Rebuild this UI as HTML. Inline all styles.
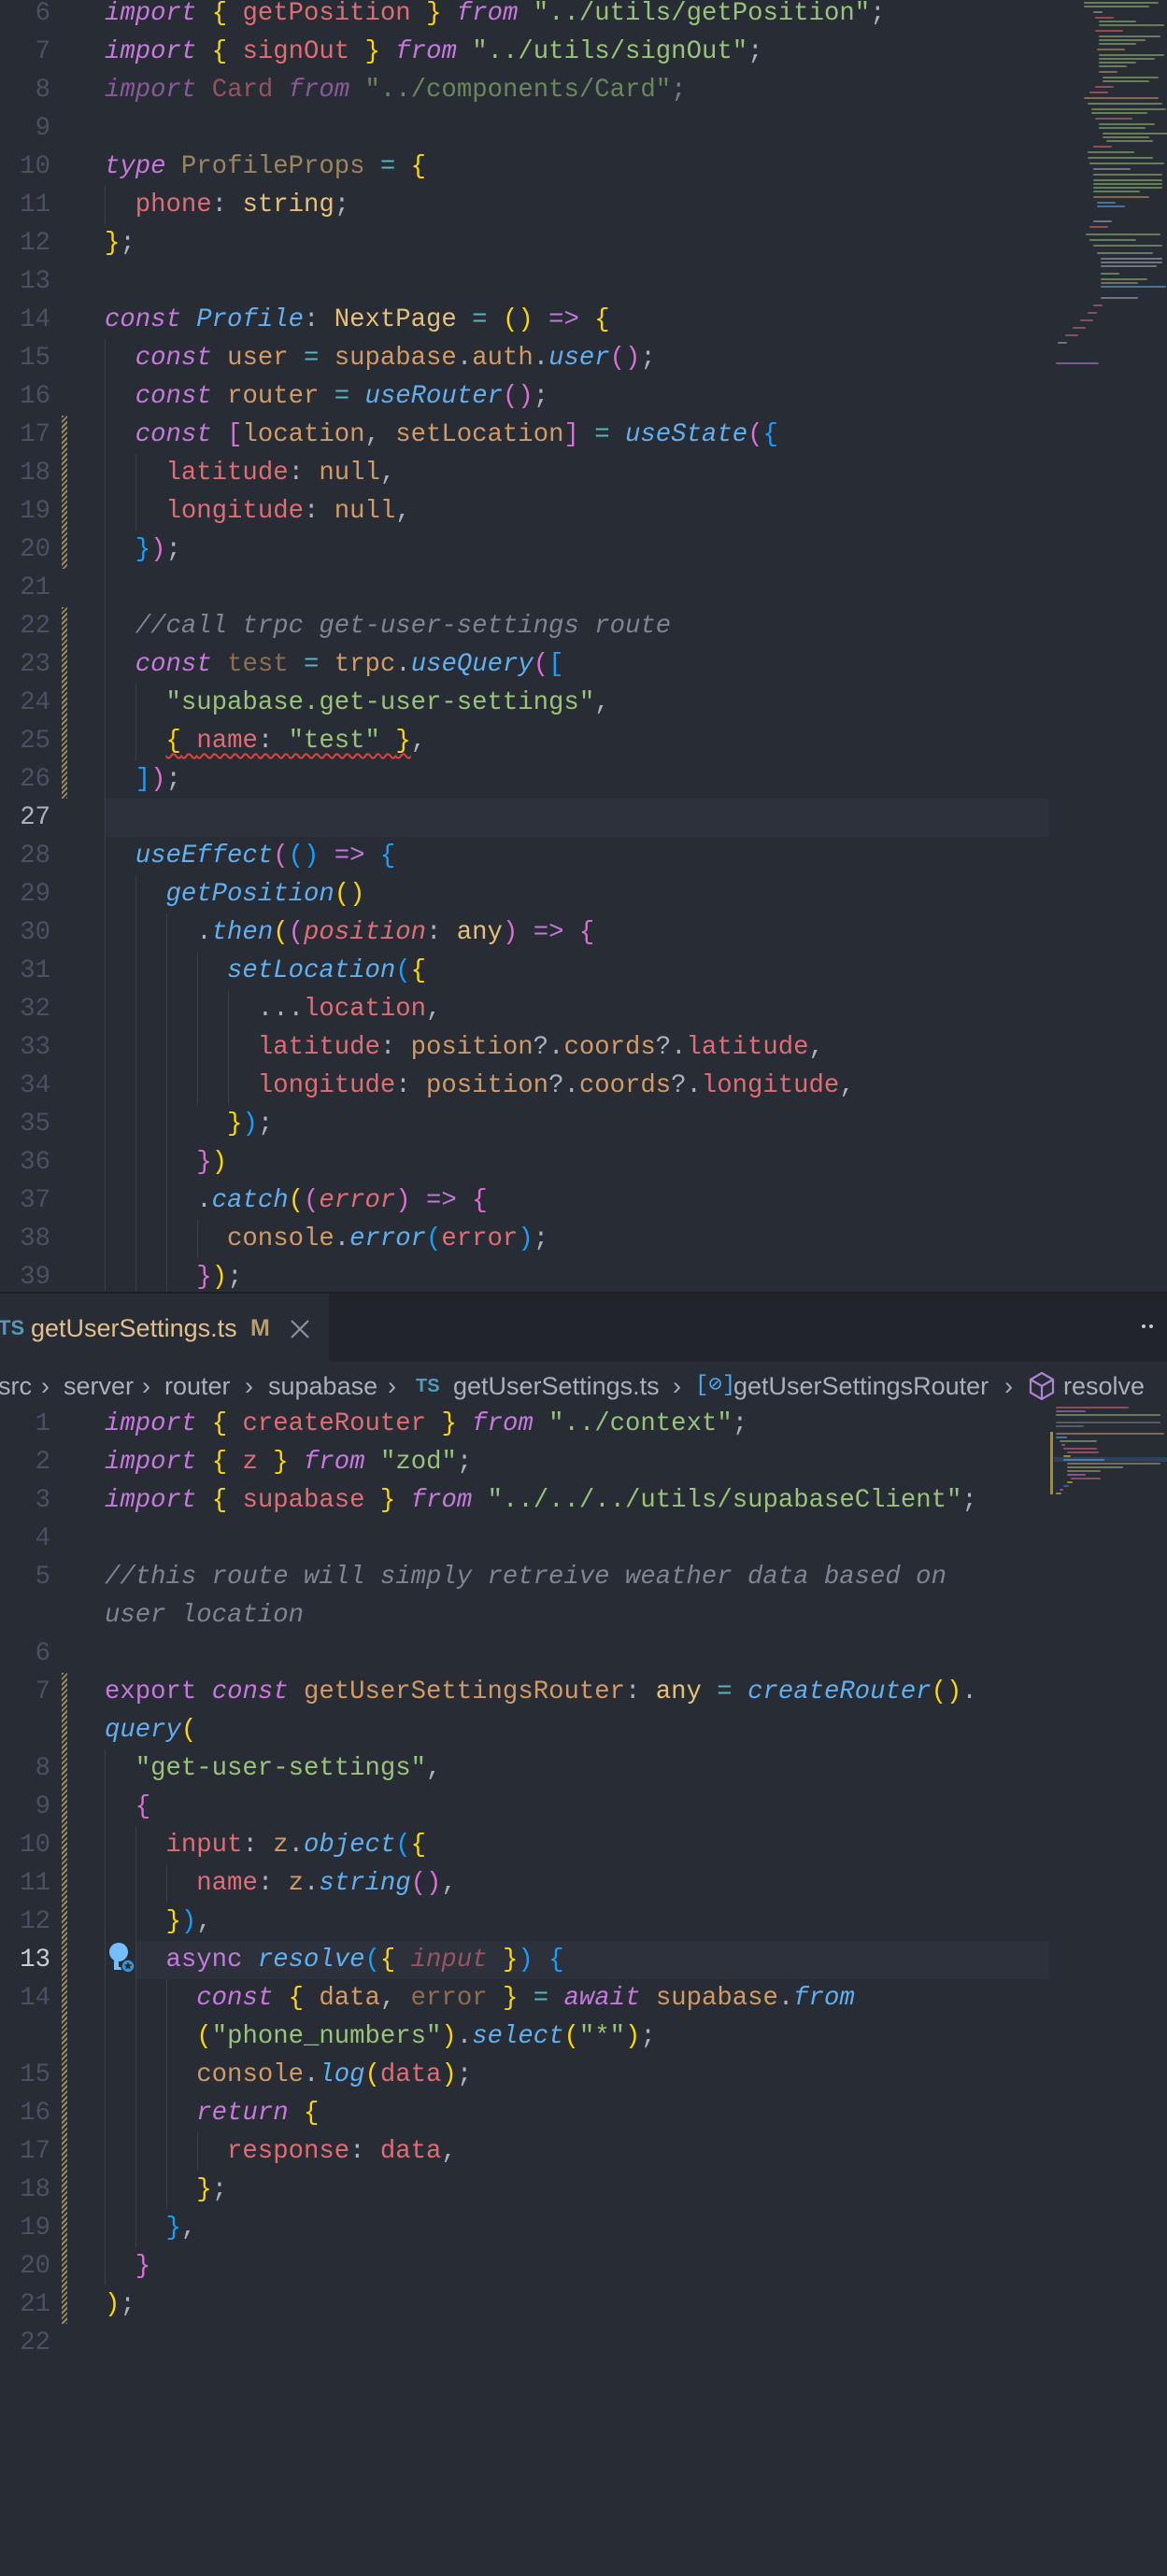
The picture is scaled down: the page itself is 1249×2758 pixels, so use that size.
<!DOCTYPE html>
<html><head><meta charset="utf-8">
<style>
*{margin:0;padding:0;box-sizing:border-box}
body{width:1249px;height:2758px;background:#282c34;position:relative;overflow:hidden;font-family:"Liberation Mono",monospace;font-size:27.3px;color:#abb2bf}
.pane{position:absolute;left:0;width:1249px;overflow:hidden}
.l{position:absolute;left:0;height:41px;line-height:41px;white-space:pre;width:1249px}
.n{position:absolute;left:0;width:54px;text-align:right;color:#495162}
.t{position:absolute;left:112px}
.k{color:#c678dd;font-style:italic}
.ku{color:#c678dd}
.r{color:#e06c75}
.o{color:#d19a66}
.y{color:#e5c07b}
.f{color:#61afef;font-style:italic}
.s{color:#98c379}
.op{color:#56b6c2}
.c{color:#7f848e;font-style:italic}
.i{font-style:italic}
.b1{color:#ffd700}.b2{color:#da70d6}.b3{color:#179fff}
.d{opacity:.6}
.g{position:absolute;width:1px;background:#3b4048}
.dirty{position:absolute;left:66px;width:6px;background:repeating-linear-gradient(135deg,#9c8a5a 0 2px,transparent 2px 4px)}
.hl{position:absolute;left:113px;width:1010px;height:41px;background:#2c313c}
.sq{text-decoration:underline wavy #e0443e;text-decoration-thickness:2px;text-underline-offset:6px}
.mm{position:absolute;height:2px;border-radius:1px;opacity:.55}
.bc{position:absolute;top:1464px;font-family:"Liberation Sans",sans-serif;font-size:27px;color:#a9b0bc;white-space:pre;line-height:40px}
</style></head><body>

<!-- TOP PANE -->
<div class="pane" style="top:0;height:1383px">
<div class="hl" style="top:855px"></div>
<div class="dirty" style="top:445px;height:164px"></div>
<div class="dirty" style="top:650px;height:205px"></div>
<div class="g" style="left:112px;top:199px;height:41px"></div>
<div class="g" style="left:112px;top:363px;height:1025px"></div>
<div class="g" style="left:145px;top:486px;height:82px"></div>
<div class="g" style="left:145px;top:732px;height:82px"></div>
<div class="g" style="left:145px;top:937px;height:450px"></div>
<div class="g" style="left:178px;top:978px;height:410px"></div>
<div class="g" style="left:211px;top:1019px;height:164px"></div>
<div class="g" style="left:211px;top:1306px;height:41px"></div>
<div class="g" style="left:244px;top:1060px;height:123px"></div>

<div class="l" style="top:-6px"><span class="n">6</span><span class="t"><span class="k">import</span> <span class="b1">{</span> <span class="r">getPosition</span> <span class="b1">}</span> <span class="k">from</span> <span class="s">"../utils/getPosition"</span>;</span></div>
<div class="l" style="top:35px"><span class="n">7</span><span class="t"><span class="k">import</span> <span class="b1">{</span> <span class="r">signOut</span> <span class="b1">}</span> <span class="k">from</span> <span class="s">"../utils/signOut"</span>;</span></div>
<div class="l" style="top:76px"><span class="n">8</span><span class="t d"><span class="k">import</span> <span class="r">Card</span> <span class="k">from</span> <span class="s">"../components/Card"</span>;</span></div>
<div class="l" style="top:117px"><span class="n">9</span></div>
<div class="l" style="top:158px"><span class="n">10</span><span class="t"><span class="k">type</span> <span class="y d">ProfileProps</span> <span class="op">=</span> <span class="b1">{</span></span></div>
<div class="l" style="top:199px"><span class="n">11</span><span class="t">  <span class="r">phone</span>: <span class="y">string</span>;</span></div>
<div class="l" style="top:240px"><span class="n">12</span><span class="t"><span class="b1">}</span>;</span></div>
<div class="l" style="top:281px"><span class="n">13</span></div>
<div class="l" style="top:322px"><span class="n">14</span><span class="t"><span class="k">const</span> <span class="f">Profile</span>: <span class="y">NextPage</span> <span class="op">=</span> <span class="b1">()</span> <span class="ku">=&gt;</span> <span class="b1">{</span></span></div>
<div class="l" style="top:363px"><span class="n">15</span><span class="t">  <span class="k">const</span> <span class="o">user</span> <span class="op">=</span> <span class="o">supabase</span>.<span class="o">auth</span>.<span class="f">user</span><span class="b2">()</span>;</span></div>
<div class="l" style="top:404px"><span class="n">16</span><span class="t">  <span class="k">const</span> <span class="o">router</span> <span class="op">=</span> <span class="f">useRouter</span><span class="b2">()</span>;</span></div>
<div class="l" style="top:445px"><span class="n">17</span><span class="t">  <span class="k">const</span> <span class="b2">[</span><span class="o">location</span>, <span class="o">setLocation</span><span class="b2">]</span> <span class="op">=</span> <span class="f">useState</span><span class="b2">(</span><span class="b3">{</span></span></div>
<div class="l" style="top:486px"><span class="n">18</span><span class="t">    <span class="r">latitude</span>: <span class="o">null</span>,</span></div>
<div class="l" style="top:527px"><span class="n">19</span><span class="t">    <span class="r">longitude</span>: <span class="o">null</span>,</span></div>
<div class="l" style="top:568px"><span class="n">20</span><span class="t">  <span class="b3">}</span><span class="b2">)</span>;</span></div>
<div class="l" style="top:609px"><span class="n">21</span></div>
<div class="l" style="top:650px"><span class="n">22</span><span class="t">  <span class="c">//call trpc get-user-settings route</span></span></div>
<div class="l" style="top:691px"><span class="n">23</span><span class="t">  <span class="k">const</span> <span class="o d">test</span> <span class="op">=</span> <span class="o">trpc</span>.<span class="f">useQuery</span><span class="b2">(</span><span class="b3">[</span></span></div>
<div class="l" style="top:732px"><span class="n">24</span><span class="t">    <span class="s">"supabase.get-user-settings"</span>,</span></div>
<div class="l" style="top:773px"><span class="n">25</span><span class="t">    <span class="sq"><span class="b1">{</span> <span class="r">name</span>: <span class="s">"test"</span> <span class="b1">}</span></span>,</span></div>
<div class="l" style="top:814px"><span class="n">26</span><span class="t">  <span class="b3">]</span><span class="b2">)</span>;</span></div>
<div class="l" style="top:855px"><span class="n" style="color:#abb2bf">27</span></div>
<div class="l" style="top:896px"><span class="n">28</span><span class="t">  <span class="f">useEffect</span><span class="b2">(</span><span class="b3">()</span> <span class="ku">=&gt;</span> <span class="b3">{</span></span></div>
<div class="l" style="top:937px"><span class="n">29</span><span class="t">    <span class="f">getPosition</span><span class="b1">()</span></span></div>
<div class="l" style="top:978px"><span class="n">30</span><span class="t">      .<span class="f">then</span><span class="b1">(</span><span class="b2">(</span><span class="r i">position</span>: <span class="y">any</span><span class="b2">)</span> <span class="ku">=&gt;</span> <span class="b2">{</span></span></div>
<div class="l" style="top:1019px"><span class="n">31</span><span class="t">        <span class="f">setLocation</span><span class="b3">(</span><span class="b1">{</span></span></div>
<div class="l" style="top:1060px"><span class="n">32</span><span class="t">          ...<span class="r">location</span>,</span></div>
<div class="l" style="top:1101px"><span class="n">33</span><span class="t">          <span class="r">latitude</span>: <span class="o">position</span>?.<span class="o">coords</span>?.<span class="r">latitude</span>,</span></div>
<div class="l" style="top:1142px"><span class="n">34</span><span class="t">          <span class="r">longitude</span>: <span class="o">position</span>?.<span class="o">coords</span>?.<span class="r">longitude</span>,</span></div>
<div class="l" style="top:1183px"><span class="n">35</span><span class="t">        <span class="b1">}</span><span class="b3">)</span>;</span></div>
<div class="l" style="top:1224px"><span class="n">36</span><span class="t">      <span class="b2">}</span><span class="b1">)</span></span></div>
<div class="l" style="top:1265px"><span class="n">37</span><span class="t">      .<span class="f">catch</span><span class="b1">(</span><span class="b2">(</span><span class="r i">error</span><span class="b2">)</span> <span class="ku">=&gt;</span> <span class="b2">{</span></span></div>
<div class="l" style="top:1306px"><span class="n">38</span><span class="t">        <span class="o">console</span>.<span class="f">error</span><span class="b3">(</span><span class="r">error</span><span class="b3">)</span>;</span></div>
<div class="l" style="top:1347px"><span class="n">39</span><span class="t">      <span class="b2">}</span><span class="b1">)</span>;</span></div>

<!-- minimap top -->
<div class="mm" style="left:1160px;width:80px;top:2px;background:#98c379"></div>
<div class="mm" style="left:1160px;width:70px;top:6px;background:#98c379"></div>
<div class="mm" style="left:1170px;width:10px;top:12px;background:#abb2bf"></div>
<div class="mm" style="left:1172px;width:20px;top:18px;background:#e06c75"></div>
<div class="mm" style="left:1176px;width:40px;top:22px;background:#98c379"></div>
<div class="mm" style="left:1176px;width:70px;top:26px;background:#98c379"></div>
<div class="mm" style="left:1172px;width:30px;top:32px;background:#e06c75"></div>
<div class="mm" style="left:1176px;width:66px;top:38px;background:#98c379"></div>
<div class="mm" style="left:1176px;width:50px;top:42px;background:#98c379"></div>
<div class="mm" style="left:1176px;width:40px;top:46px;background:#98c379"></div>
<div class="mm" style="left:1174px;width:30px;top:52px;background:#d19a66"></div>
<div class="mm" style="left:1176px;width:70px;top:58px;background:#98c379"></div>
<div class="mm" style="left:1176px;width:60px;top:62px;background:#98c379"></div>
<div class="mm" style="left:1176px;width:40px;top:66px;background:#98c379"></div>
<div class="mm" style="left:1176px;width:30px;top:70px;background:#98c379"></div>
<div class="mm" style="left:1176px;width:20px;top:76px;background:#d19a66"></div>
<div class="mm" style="left:1180px;width:60px;top:82px;background:#98c379"></div>
<div class="mm" style="left:1180px;width:50px;top:86px;background:#98c379"></div>
<div class="mm" style="left:1172px;width:20px;top:92px;background:#e06c75"></div>
<div class="mm" style="left:1166px;width:20px;top:98px;background:#e06c75"></div>
<div class="mm" style="left:1160px;width:80px;top:104px;background:#d19a66"></div>
<div class="mm" style="left:1164px;width:80px;top:110px;background:#98c379"></div>
<div class="mm" style="left:1168px;width:80px;top:116px;background:#98c379"></div>
<div class="mm" style="left:1168px;width:60px;top:120px;background:#98c379"></div>
<div class="mm" style="left:1172px;width:40px;top:126px;background:#e06c75"></div>
<div class="mm" style="left:1176px;width:60px;top:132px;background:#98c379"></div>
<div class="mm" style="left:1176px;width:50px;top:136px;background:#98c379"></div>
<div class="mm" style="left:1180px;width:70px;top:142px;background:#98c379"></div>
<div class="mm" style="left:1180px;width:50px;top:146px;background:#98c379"></div>
<div class="mm" style="left:1184px;width:50px;top:150px;background:#98c379"></div>
<div class="mm" style="left:1170px;width:20px;top:156px;background:#e06c75"></div>
<div class="mm" style="left:1164px;width:50px;top:162px;background:#98c379"></div>
<div class="mm" style="left:1164px;width:70px;top:168px;background:#98c379"></div>
<div class="mm" style="left:1166px;width:80px;top:174px;background:#98c379"></div>
<div class="mm" style="left:1170px;width:40px;top:180px;background:#abb2bf"></div>
<div class="mm" style="left:1170px;width:74px;top:186px;background:#98c379"></div>
<div class="mm" style="left:1170px;width:74px;top:192px;background:#98c379"></div>
<div class="mm" style="left:1170px;width:74px;top:196px;background:#98c379"></div>
<div class="mm" style="left:1170px;width:74px;top:200px;background:#98c379"></div>
<div class="mm" style="left:1170px;width:50px;top:204px;background:#98c379"></div>
<div class="mm" style="left:1170px;width:60px;top:210px;background:#d19a66"></div>
<div class="mm" style="left:1174px;width:20px;top:216px;background:#61afef"></div>
<div class="mm" style="left:1174px;width:30px;top:220px;background:#61afef"></div>
<div class="mm" style="left:1170px;width:20px;top:236px;background:#abb2bf"></div>
<div class="mm" style="left:1166px;width:20px;top:242px;background:#e06c75"></div>
<div class="mm" style="left:1162px;width:80px;top:250px;background:#98c379"></div>
<div class="mm" style="left:1166px;width:50px;top:256px;background:#98c379"></div>
<div class="mm" style="left:1170px;width:74px;top:262px;background:#98c379"></div>
<div class="mm" style="left:1174px;width:60px;top:270px;background:#98c379"></div>
<div class="mm" style="left:1178px;width:66px;top:276px;background:#abb2bf"></div>
<div class="mm" style="left:1178px;width:66px;top:280px;background:#abb2bf"></div>
<div class="mm" style="left:1178px;width:60px;top:284px;background:#abb2bf"></div>
<div class="mm" style="left:1178px;width:20px;top:292px;background:#98c379"></div>
<div class="mm" style="left:1178px;width:50px;top:298px;background:#98c379"></div>
<div class="mm" style="left:1178px;width:40px;top:302px;background:#d19a66"></div>
<div class="mm" style="left:1178px;width:70px;top:306px;background:#61afef"></div>
<div class="mm" style="left:1178px;width:40px;top:318px;background:#abb2bf"></div>
<div class="mm" style="left:1170px;width:10px;top:326px;background:#e06c75"></div>
<div class="mm" style="left:1164px;width:10px;top:334px;background:#e06c75"></div>
<div class="mm" style="left:1156px;width:14px;top:342px;background:#e06c75"></div>
<div class="mm" style="left:1148px;width:14px;top:350px;background:#e06c75"></div>
<div class="mm" style="left:1140px;width:14px;top:358px;background:#e06c75"></div>
<div class="mm" style="left:1132px;width:10px;top:366px;background:#abb2bf"></div>
<div class="mm" style="left:1130px;width:46px;top:388px;background:#c678dd"></div>
</div>

<!-- separator & tab bar -->
<div style="position:absolute;left:0;top:1383px;width:1249px;height:75px;background:#21252b;border-top:2px solid #1b1e23"></div>
<div style="position:absolute;left:0;top:1385px;width:352px;height:73px;background:#282c34"></div>
<div style="position:absolute;left:-2px;top:1402px;font-family:'Liberation Sans',sans-serif;font-size:22px;font-weight:bold;color:#519aba;line-height:40px">TS</div>
<div style="position:absolute;left:33px;top:1402px;font-family:'Liberation Sans',sans-serif;font-size:27px;color:#e2c08d;line-height:40px;white-space:pre">getUserSettings.ts</div>
<div style="position:absolute;left:268px;top:1402px;font-family:'Liberation Sans',sans-serif;font-size:25px;font-weight:bold;color:#b89c70;line-height:40px">M</div>
<svg style="position:absolute;left:310px;top:1412px" width="22" height="22" viewBox="0 0 22 22"><path d="M2 2L20 20M20 2L2 20" stroke="#8b919c" stroke-width="2.2"/></svg>
<div style="position:absolute;left:1222px;top:1418px;width:4px;height:4px;background:#c5c8ce;border-radius:2px"></div>
<div style="position:absolute;left:1230px;top:1418px;width:4px;height:4px;background:#c5c8ce;border-radius:2px"></div>

<!-- breadcrumbs -->
<div class="bc" style="left:-2px">src</div>
<div class="bc" style="left:44px">›</div>
<div class="bc" style="left:68px">server</div>
<div class="bc" style="left:152px">›</div>
<div class="bc" style="left:176px">router</div>
<div class="bc" style="left:262px">›</div>
<div class="bc" style="left:287px">supabase</div>
<div class="bc" style="left:415px">›</div>
<div class="bc" style="left:445px;font-size:20px;font-weight:bold;color:#519aba">TS</div>
<div class="bc" style="left:485px">getUserSettings.ts</div>
<div class="bc" style="left:720px">›</div>
<div class="bc" style="left:744px;font-size:24px;color:#4fa6ed;font-family:'Liberation Mono',monospace">[⊘]</div>
<div class="bc" style="left:785px">getUserSettingsRouter</div>
<div class="bc" style="left:1075px">›</div>
<svg style="position:absolute;left:1100px;top:1468px" width="30" height="32" viewBox="0 0 30 32"><path d="M15 2L27 9V23L15 30L3 23V9Z M3 9L15 16L27 9 M15 16V30" fill="none" stroke="#b180d7" stroke-width="2.2"/></svg>
<div class="bc" style="left:1138px">resolve</div>

<!-- BOTTOM PANE -->
<div class="pane" style="top:0;height:2758px;pointer-events:none">
<div class="hl" style="top:2078px;left:145px;width:978px"></div>
<div class="dirty" style="top:1791px;height:697px"></div>
<div class="g" style="left:112px;top:1873px;height:574px"></div>
<div class="g" style="left:145px;top:1955px;height:451px"></div>
<div class="g" style="left:178px;top:1996px;height:41px"></div>
<div class="g" style="left:178px;top:2119px;height:246px"></div>
<div class="g" style="left:211px;top:2283px;height:41px"></div>

<div class="l" style="top:1504px"><span class="n">1</span><span class="t"><span class="k">import</span> <span class="b1">{</span> <span class="r">createRouter</span> <span class="b1">}</span> <span class="k">from</span> <span class="s">"../context"</span>;</span></div>
<div class="l" style="top:1545px"><span class="n">2</span><span class="t"><span class="k">import</span> <span class="b1">{</span> <span class="r">z</span> <span class="b1">}</span> <span class="k">from</span> <span class="s">"zod"</span>;</span></div>
<div class="l" style="top:1586px"><span class="n">3</span><span class="t"><span class="k">import</span> <span class="b1">{</span> <span class="r">supabase</span> <span class="b1">}</span> <span class="k">from</span> <span class="s">"../../../utils/supabaseClient"</span>;</span></div>
<div class="l" style="top:1627px"><span class="n">4</span></div>
<div class="l" style="top:1668px"><span class="n">5</span><span class="t"><span class="c">//this route will simply retreive weather data based on</span></span></div>
<div class="l" style="top:1709px"><span class="t"><span class="c">user location</span></span></div>
<div class="l" style="top:1750px"><span class="n">6</span></div>
<div class="l" style="top:1791px"><span class="n">7</span><span class="t"><span class="ku">export</span> <span class="k">const</span> <span class="o">getUserSettingsRouter</span>: <span class="y">any</span> <span class="op">=</span> <span class="f">createRouter</span><span class="b1">()</span>.</span></div>
<div class="l" style="top:1832px"><span class="t"><span class="f">query</span><span class="b1">(</span></span></div>
<div class="l" style="top:1873px"><span class="n">8</span><span class="t">  <span class="s">"get-user-settings"</span>,</span></div>
<div class="l" style="top:1914px"><span class="n">9</span><span class="t">  <span class="b2">{</span></span></div>
<div class="l" style="top:1955px"><span class="n">10</span><span class="t">    <span class="r">input</span>: <span class="o">z</span>.<span class="f">object</span><span class="b3">(</span><span class="b1">{</span></span></div>
<div class="l" style="top:1996px"><span class="n">11</span><span class="t">      <span class="r">name</span>: <span class="o">z</span>.<span class="f">string</span><span class="b2">()</span>,</span></div>
<div class="l" style="top:2037px"><span class="n">12</span><span class="t">    <span class="b1">}</span><span class="b3">)</span>,</span></div>
<div class="l" style="top:2078px"><span class="n" style="color:#c8ccd4">13</span><span class="t">    <span class="ku">async</span> <span class="f">resolve</span><span class="b3">(</span><span class="b1">{</span> <span class="r i d">input</span> <span class="b1">}</span><span class="b3">)</span> <span class="b3">{</span></span></div>
<div class="l" style="top:2119px"><span class="n">14</span><span class="t">      <span class="k">const</span> <span class="b1">{</span> <span class="o">data</span>, <span class="o d">error</span> <span class="b1">}</span> <span class="op">=</span> <span class="k">await</span> <span class="o">supabase</span>.<span class="f">from</span></span></div>
<div class="l" style="top:2160px"><span class="t">      <span class="b1">(</span><span class="s">"phone_numbers"</span><span class="b1">)</span>.<span class="f">select</span><span class="b1">(</span><span class="s">"*"</span><span class="b1">)</span>;</span></div>
<div class="l" style="top:2201px"><span class="n">15</span><span class="t">      <span class="o">console</span>.<span class="f">log</span><span class="b1">(</span><span class="r">data</span><span class="b1">)</span>;</span></div>
<div class="l" style="top:2242px"><span class="n">16</span><span class="t">      <span class="k">return</span> <span class="b1">{</span></span></div>
<div class="l" style="top:2283px"><span class="n">17</span><span class="t">        <span class="r">response</span>: <span class="r">data</span>,</span></div>
<div class="l" style="top:2324px"><span class="n">18</span><span class="t">      <span class="b1">}</span>;</span></div>
<div class="l" style="top:2365px"><span class="n">19</span><span class="t">    <span class="b3">}</span>,</span></div>
<div class="l" style="top:2406px"><span class="n">20</span><span class="t">  <span class="b2">}</span></span></div>
<div class="l" style="top:2447px"><span class="n">21</span><span class="t"><span class="b1">)</span>;</span></div>
<div class="l" style="top:2488px"><span class="n">22</span></div>

<!-- lightbulb -->
<svg style="position:absolute;left:116px;top:2080px" width="30" height="34" viewBox="0 0 30 34"><circle cx="11" cy="10" r="10" fill="#75beff"/><rect x="6" y="19" width="5" height="10" fill="#75beff"/><rect x="6" y="26" width="10" height="3" fill="#75beff"/><circle cx="21" cy="25" r="7" fill="#3e8fd6" stroke="#282c34" stroke-width="1.5"/><path d="M21 20.5l1.3 2.8 3 .3-2.3 2 .7 3-2.7-1.6-2.7 1.6.7-3-2.3-2 3-.3z" fill="#282c34"/></svg>

<!-- minimap bottom -->
<div class="mm" style="left:1130px;width:78px;top:1506px;background:#e06c75"></div>
<div class="mm" style="left:1130px;width:32px;top:1510px;background:#c678dd"></div>
<div class="mm" style="left:1130px;width:112px;top:1514px;background:#98c379"></div>
<div class="mm" style="left:1130px;width:112px;top:1522px;background:#7f848e"></div>
<div class="mm" style="left:1130px;width:30px;top:1526px;background:#7f848e"></div>
<div style="position:absolute;left:1124px;top:1533px;width:3px;height:67px;background:#9c8a5a"></div>
<div class="mm" style="left:1130px;width:116px;top:1534px;background:#d19a66"></div>
<div class="mm" style="left:1130px;width:12px;top:1538px;background:#61afef"></div>
<div class="mm" style="left:1134px;width:40px;top:1542px;background:#98c379"></div>
<div class="mm" style="left:1136px;width:4px;top:1546px;background:#da70d6"></div>
<div class="mm" style="left:1138px;width:36px;top:1550px;background:#e06c75"></div>
<div class="mm" style="left:1142px;width:34px;top:1554px;background:#e06c75"></div>
<div class="mm" style="left:1138px;width:8px;top:1558px;background:#ffd700"></div>
<div style="position:absolute;left:1128px;top:1560px;width:121px;height:5px;background:#2f4a6a;opacity:.7"></div>
<div class="mm" style="left:1138px;width:44px;top:1562px;background:#61afef"></div>
<div class="mm" style="left:1142px;width:100px;top:1566px;background:#d19a66"></div>
<div class="mm" style="left:1142px;width:60px;top:1570px;background:#98c379"></div>
<div class="mm" style="left:1142px;width:36px;top:1574px;background:#d19a66"></div>
<div class="mm" style="left:1142px;width:20px;top:1578px;background:#c678dd"></div>
<div class="mm" style="left:1146px;width:32px;top:1582px;background:#e06c75"></div>
<div class="mm" style="left:1142px;width:6px;top:1586px;background:#ffd700"></div>
<div class="mm" style="left:1138px;width:6px;top:1590px;background:#179fff"></div>
<div class="mm" style="left:1134px;width:4px;top:1594px;background:#da70d6"></div>
<div class="mm" style="left:1130px;width:6px;top:1598px;background:#ffd700"></div>
</div>
</body></html>
